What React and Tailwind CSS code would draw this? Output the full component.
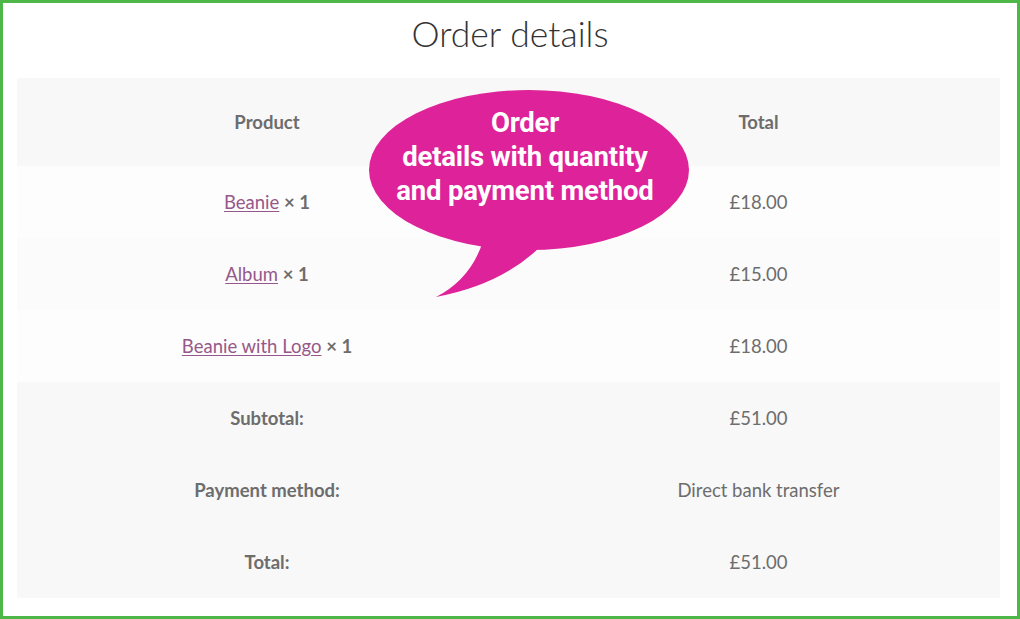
import React from "react";

const items = [
  { name: "Beanie", qty: 1, total: "£18.00", bg: "bg-[#fdfdfd]" },
  { name: "Album", qty: 1, total: "£15.00", bg: "bg-[#fbfbfb]" },
  { name: "Beanie with Logo", qty: 1, total: "£18.00", bg: "bg-[#fdfdfd]" },
];

const totals = [
  { label: "Subtotal:", value: "£51.00" },
  { label: "Payment method:", value: "Direct bank transfer" },
  { label: "Total:", value: "£51.00" },
];

// speech bubble over the table
const Bubble = () => (
  <div className="absolute left-[363px] top-[84px] w-[330px] h-[215px]">
    <svg width="330" height="215" viewBox="363 84 330 215" className="absolute inset-0">
      <ellipse cx="526" cy="167" rx="160" ry="80" fill="#de2299" />
      <path d="M480 238 Q468 276 433 294 Q498 282 537 244 Z" fill="#de2299" />
    </svg>
    <div className="absolute -left-[1px] top-[19px] w-[320px] text-center text-white font-bold text-[27.5px] leading-[34px] tracking-[-0.2px] font-['Roboto',sans-serif]">
      Order
      <br />
      details with quantity
      <br />
      and payment method
    </div>
  </div>
);

const App = () => {
  return (
    <div className="relative w-[1020px] h-[619px] border-[3px] border-[#4db848] bg-white font-['Lato',sans-serif] text-[#6d6d6d]">
      <h2 className="h-[75px] pt-[9px] text-center text-[35.5px] font-light text-[#333] leading-[44px]">
        Order details
      </h2>
      <table className="ml-[14px] w-[983px] border-collapse text-[18.5px]">
        <thead>
          <tr className="h-[88px] bg-[#f8f8f8]">
            <th className="w-[500px] pt-[2px] font-bold">Product</th>
            <th className="pt-[2px] font-bold">Total</th>
          </tr>
        </thead>
        <tbody>
          {items.map((it) => (
            <tr key={it.name} className={`h-[72px] ${it.bg}`}>
              <td className="pt-[2px] text-center">
                <a href="#" className="text-[#96588a] underline underline-offset-[2px]">
                  {it.name}
                </a>{" "}
                <strong className="font-bold">× {it.qty}</strong>
              </td>
              <td className="pt-[2px] text-center">{it.total}</td>
            </tr>
          ))}
        </tbody>
        <tfoot>
          {totals.map((t) => (
            <tr key={t.label} className="h-[72px] bg-[#f8f8f8]">
              <th className="pt-[2px] font-bold">{t.label}</th>
              <td className="pt-[2px] text-center">{t.value}</td>
            </tr>
          ))}
        </tfoot>
      </table>
      <Bubble />
    </div>
  );
};

export default App;
